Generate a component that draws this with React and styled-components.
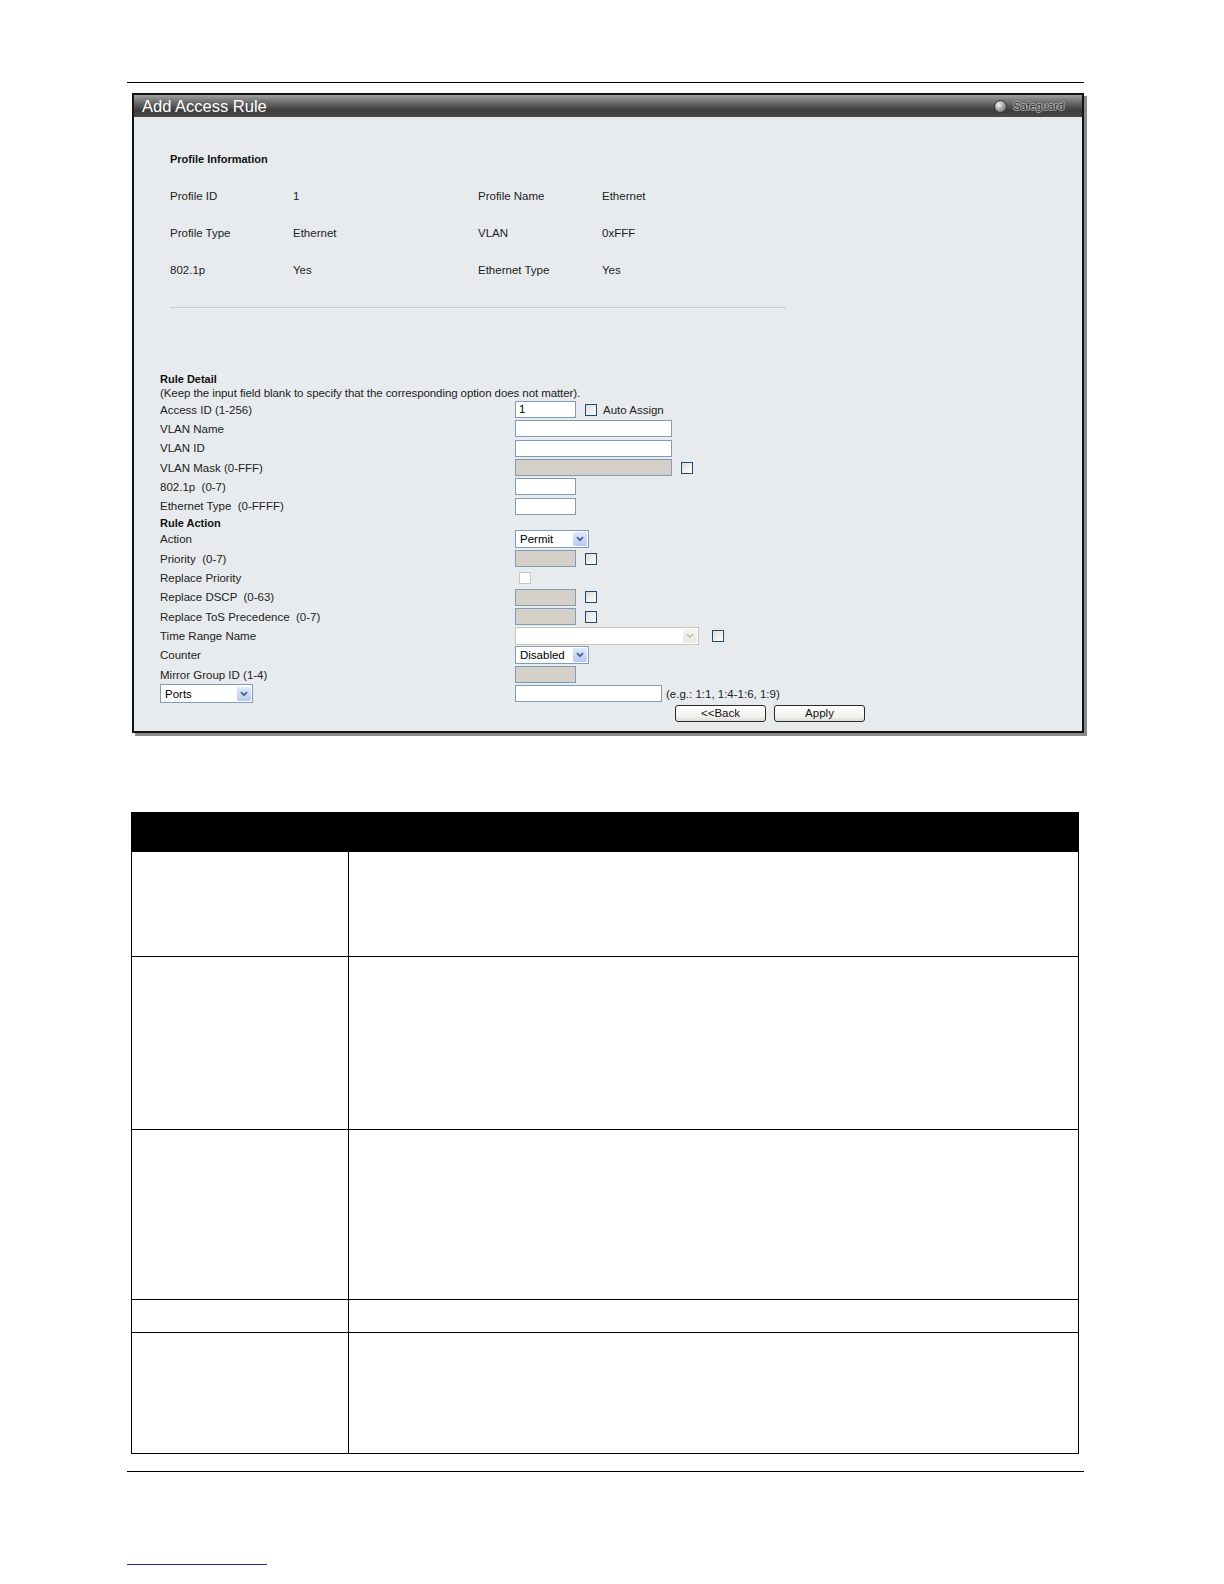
import React from "react";
import styled, { createGlobalStyle } from "styled-components";

const Global = createGlobalStyle`
  body {
    margin: 0;
    background: #ffffff;
    font-family: "Liberation Sans", Arial, Helvetica, sans-serif;
  }
`;

const Page = styled.div`
  width: 957px;
  margin-left: 127px;
  padding-top: 82px;
`;

const Rule = styled.div`
  height: 1px;
  background: #000;
`;

const Panel = styled.div`
  box-sizing: border-box;
  width: 952px;
  height: 640px;
  margin: 10px 0 0 5px;
  border: 2px solid #141414;
  background: #e8ebed;
  box-shadow: 3px 3px 0 #8a8a8a;
`;

const TitleBar = styled.div`
  height: 22px;
  display: flex;
  align-items: center;
  justify-content: space-between;
  padding: 0 18px 0 8px;
  background: linear-gradient(#a0a0a0 0%, #6a6a6a 35%, #3c3c3c 70%, #4a4a4a 100%);
`;

const Title = styled.div`
  color: #fff;
  font-size: 16.5px;
  line-height: 22px;
`;

const Safeguard = styled.div`
  display: flex;
  align-items: center;
  gap: 6px;
  font-size: 11px;
  color: #2a2a2a;
  text-shadow: 1px 0 0 #b0b0b0, -1px 0 0 #b0b0b0, 0 1px 0 #b0b0b0, 0 -1px 0 #b0b0b0;
`;

const Lamp = styled.span`
  width: 11px;
  height: 11px;
  border-radius: 50%;
  border: 1px solid #333;
  background: radial-gradient(circle at 35% 35%, #f2f2f2, #9a9a9a 55%, #555);
`;

const ProfileSection = styled.div`
  padding: 23px 0 0 36px;
`;

const ProfileGrid = styled.div`
  display: grid;
  grid-template-columns: 123px 185px 124px 200px;
  grid-auto-rows: 37px;
  align-items: center;
  font-size: 11.5px;
  color: #222;
`;

const Heading = styled.div`
  grid-column: 1 / -1;
  font-weight: bold;
  font-size: 11px;
  color: #111;
`;

const Separator = styled.div`
  width: 616px;
  height: 1px;
  margin-top: 19px;
  background: #c9cdd0;
`;

const RuleSection = styled.div`
  padding: 64px 0 0 26px;
  font-size: 11.5px;
  color: #222;
`;

const SubHead = styled.div`
  font-weight: bold;
  font-size: 11px;
  color: #111;
  line-height: 14px;
  height: 14px;
`;

const Note = styled.div`
  line-height: 14px;
  letter-spacing: -0.08px;
`;

const Row = styled.div`
  display: grid;
  grid-template-columns: 355px 1fr;
  align-items: center;
  height: 19.3px;
`;

const Controls = styled.div`
  display: flex;
  align-items: center;
  gap: ${(p) => p.gap || 9}px;
  padding-left: ${(p) => p.indent || 0}px;
`;

const TextInput = styled.div`
  box-sizing: border-box;
  width: ${(p) => p.w}px;
  height: 17px;
  border: 1px solid #7f9db9;
  background: ${(p) => (p.disabled ? "#d4d0c8" : "#fff")};
  font-size: 11.5px;
  line-height: 15px;
  padding-left: 3px;
  color: #000;
`;

const Check = styled.span`
  box-sizing: border-box;
  width: 12px;
  height: 12px;
  border: 1px solid ${(p) => (p.disabled ? "#cac8bb" : "#1c4b73")};
  background: ${(p) =>
    p.disabled ? "#fff" : "linear-gradient(135deg, #dcdcd7, #ffffff)"};
  margin-left: ${(p) => p.ml || 0}px;
`;

const CheckLabel = styled.span`
  margin-left: -3px;
`;

const SelectBox = styled.div`
  box-sizing: border-box;
  width: ${(p) => p.w}px;
  height: ${(p) => p.h || 18}px;
  display: flex;
  align-items: center;
  border: 1px solid ${(p) => (p.disabled ? "#c9c7ba" : "#7f9db9")};
  background: #fff;
  padding: 1px;
  font-size: 11.5px;
  color: #000;
`;

const SelectText = styled.span`
  flex: 1;
  padding-left: 3px;
`;

const Arrow = styled.span`
  width: 14px;
  height: 14px;
  display: flex;
  align-items: center;
  justify-content: center;
  border-radius: 2px;
  background: ${(p) =>
    p.disabled
      ? "linear-gradient(#f4f4f0, #e8e8e3)"
      : "linear-gradient(#e0e9fd, #b5c9f4)"};
`;

const Hint = styled.span`
  margin-left: -5px;
`;

const Button = styled.button`
  box-sizing: border-box;
  width: 91px;
  height: 17px;
  padding: 0;
  border: 1px solid #2b2b2b;
  border-radius: 3px;
  background: linear-gradient(#ffffff, #f1f1ee 70%, #dedcd4);
  font-family: "Liberation Sans", Arial, sans-serif;
  font-size: 11.5px;
  color: #111;
`;

const Chevron = ({ disabled }) => (
  <svg width="8" height="6" viewBox="0 0 8 6">
    <path
      d="M1 1.2 L4 4.2 L7 1.2"
      fill="none"
      stroke={disabled ? "#c9c9c2" : "#4d6185"}
      strokeWidth="1.8"
    />
  </svg>
);

const Select = ({ w, h, value, disabled }) => (
  <SelectBox w={w} h={h} disabled={disabled}>
    <SelectText>{value}</SelectText>
    <Arrow disabled={disabled}>
      <Chevron disabled={disabled} />
    </Arrow>
  </SelectBox>
);

const DescTable = styled.table`
  width: 948px;
  margin: 79px 0 0 4px;
  border-collapse: collapse;
`;

const HeadCell = styled.th`
  height: 38px;
  background: #000;
  padding: 0;
  border: 1px solid #000;
`;

const Cell = styled.td`
  height: ${(p) => p.h}px;
  width: ${(p) => p.w || "auto"};
  border: 1px solid #000;
  padding: 0;
`;

const BottomRule = styled(Rule)`
  margin-top: 17px;
`;

const FooterLink = styled.div`
  width: 140px;
  height: 1px;
  margin-top: 92px;
  background: #23237a;
`;

const profile = [
  ["Profile ID", "1", "Profile Name", "Ethernet"],
  ["Profile Type", "Ethernet", "VLAN", "0xFFF"],
  ["802.1p", "Yes", "Ethernet Type", "Yes"],
];

const rowHeights = [104, 172, 169, 32, 120];

export default function App() {
  return (
    <>
      <Global />
      <Page>
        <Rule />
        <Panel>
          <TitleBar>
            <Title>Add Access Rule</Title>
            <Safeguard>
              <Lamp />
              Safeguard
            </Safeguard>
          </TitleBar>

          <ProfileSection>
            <ProfileGrid>
              <Heading>Profile Information</Heading>
              {profile.map((r) => r.map((c, i) => <div key={r[0] + i}>{c}</div>))}
            </ProfileGrid>
            <Separator />
          </ProfileSection>

          <RuleSection>
            <SubHead>Rule Detail</SubHead>
            <Note>
              (Keep the input field blank to specify that the corresponding option
              does not matter).
            </Note>
            <Row>
              <span>Access ID (1-256)</span>
              <Controls>
                <TextInput w={61}>1</TextInput>
                <Check />
                <CheckLabel>Auto Assign</CheckLabel>
              </Controls>
            </Row>
            <Row>
              <span>VLAN Name</span>
              <Controls>
                <TextInput w={157} />
              </Controls>
            </Row>
            <Row>
              <span>VLAN ID</span>
              <Controls>
                <TextInput w={157} />
              </Controls>
            </Row>
            <Row>
              <span>VLAN Mask (0-FFF)</span>
              <Controls>
                <TextInput w={157} disabled />
                <Check />
              </Controls>
            </Row>
            <Row>
              <span>802.1p &nbsp;(0-7)</span>
              <Controls>
                <TextInput w={61} />
              </Controls>
            </Row>
            <Row>
              <span>Ethernet Type &nbsp;(0-FFFF)</span>
              <Controls>
                <TextInput w={61} />
              </Controls>
            </Row>

            <SubHead>Rule Action</SubHead>
            <Row>
              <span>Action</span>
              <Controls>
                <Select w={74} value="Permit" />
              </Controls>
            </Row>
            <Row>
              <span>Priority &nbsp;(0-7)</span>
              <Controls>
                <TextInput w={61} disabled />
                <Check />
              </Controls>
            </Row>
            <Row>
              <span>Replace Priority</span>
              <Controls>
                <Check disabled ml={4} />
              </Controls>
            </Row>
            <Row>
              <span>Replace DSCP &nbsp;(0-63)</span>
              <Controls>
                <TextInput w={61} disabled />
                <Check />
              </Controls>
            </Row>
            <Row>
              <span>Replace ToS Precedence &nbsp;(0-7)</span>
              <Controls>
                <TextInput w={61} disabled />
                <Check />
              </Controls>
            </Row>
            <Row>
              <span>Time Range Name</span>
              <Controls gap={13}>
                <Select w={184} value="" disabled />
                <Check />
              </Controls>
            </Row>
            <Row>
              <span>Counter</span>
              <Controls>
                <Select w={74} value="Disabled" />
              </Controls>
            </Row>
            <Row>
              <span>Mirror Group ID (1-4)</span>
              <Controls>
                <TextInput w={61} disabled />
              </Controls>
            </Row>
            <Row>
              <Controls>
                <Select w={93} h={19} value="Ports" />
              </Controls>
              <Controls>
                <TextInput w={147} />
                <Hint>(e.g.: 1:1, 1:4-1:6, 1:9)</Hint>
              </Controls>
            </Row>
            <Row>
              <span />
              <Controls indent={160} gap={8}>
                <Button>&lt;&lt;Back</Button>
                <Button>Apply</Button>
              </Controls>
            </Row>
          </RuleSection>
        </Panel>

        <DescTable>
          <thead>
            <tr>
              <HeadCell colSpan={2} />
            </tr>
          </thead>
          <tbody>
            {rowHeights.map((h, i) => (
              <tr key={i}>
                <Cell h={h} w="216px" />
                <Cell h={h} />
              </tr>
            ))}
          </tbody>
        </DescTable>

        <BottomRule />
        <FooterLink />
      </Page>
    </>
  );
}
